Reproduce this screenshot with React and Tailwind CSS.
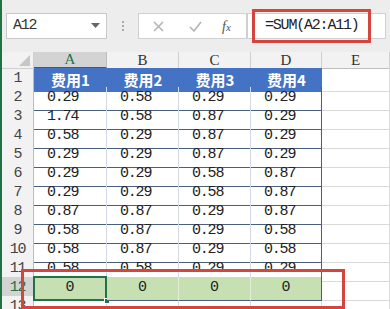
import React from "react";

const COLS = "grid grid-cols-[32px_73px_72px_72px_71px_1fr]";
const mono = { fontFamily: '"Liberation Mono", "DejaVu Sans Mono", monospace' };
const cjk = { fontFamily: '"Noto Sans CJK SC", "Noto Sans", sans-serif' };
const serif = { fontFamily: '"Liberation Serif", "DejaVu Serif", serif' };

const data = [
  ["0.29", "0.58", "0.29", "0.29"],
  ["1.74", "0.58", "0.87", "0.29"],
  ["0.58", "0.29", "0.87", "0.29"],
  ["0.29", "0.29", "0.87", "0.29"],
  ["0.29", "0.29", "0.58", "0.87"],
  ["0.29", "0.29", "0.58", "0.87"],
  ["0.87", "0.87", "0.29", "0.87"],
  ["0.58", "0.87", "0.29", "0.58"],
  ["0.58", "0.87", "0.29", "0.58"],
  ["0.58", "0.58", "0.29", "0.29"],
];

function RowHead({ n, active }) {
  return (
    <div
      className={
        "flex items-center justify-center border-b border-r text-[15px] tracking-[-1.2px] " +
        (active
          ? "bg-[#d3d3d3] text-[#217346] border-b-[#bdbdbd] border-r-[#217346]"
          : "bg-[#f2f2f2] text-[#444] border-b-[#d6d6d6] border-r-[#bdbdbd]")
      }
      style={mono}
    >
      {n}
    </div>
  );
}

export default function App() {
  return (
    <div className="relative w-[390px] h-[309px] overflow-hidden bg-white border-l-2 border-[#217346]">
      {/* toolbar */}
      <div className="h-[52px] bg-[#ededed] flex items-start pt-[13px] pl-[4px]">
        <div className="w-[101px] h-[26px] bg-white border border-[#c8c8c8] flex items-center pl-[6px] pr-[6px] justify-between">
          <span className="text-[15px] text-[#333] tracking-[-1.2px]" style={mono}>A12</span>
          <svg width="9" height="6" viewBox="0 0 9 6"><polygon points="0,0 9,0 4.5,5" fill="#666" /></svg>
        </div>
        <div className="w-[31px] h-[26px] flex flex-col items-center justify-center gap-[2px]">
          <div className="w-[2px] h-[2px] bg-[#aaa]" />
          <div className="w-[2px] h-[2px] bg-[#aaa]" />
          <div className="w-[2px] h-[2px] bg-[#aaa]" />
        </div>
        <div className="w-[109px] h-[26px] bg-white border border-[#d0d0d0] flex items-center">
          <svg className="ml-[14px]" width="11" height="11" viewBox="0 0 11 11">
            <path d="M1 1 L10 10 M10 1 L1 10" stroke="#b4b4b4" strokeWidth="1.6" />
          </svg>
          <svg className="ml-[25px]" width="13" height="11" viewBox="0 0 13 11">
            <path d="M1 6 L5 10 L12 1" stroke="#b4b4b4" strokeWidth="1.6" fill="none" />
          </svg>
          <span className="ml-[20px] italic text-[14px] text-[#555]" style={serif}>
            f<span className="text-[11px]">x</span>
          </span>
        </div>
        <div className="w-[139px] h-[26px] bg-white border border-[#d0d0d0] flex items-center pl-[17px]">
          <span className="text-[15px] text-[#222] tracking-[-1.2px]" style={mono}>=SUM(A2:A11)</span>
        </div>
      </div>

      {/* column headers */}
      <div className={COLS + " h-[16px] bg-[#f2f2f2]"}>
        <div className="relative border-r border-b border-[#d0d0d0]">
          <svg className="absolute right-[3px] bottom-[2px]" width="11" height="11" viewBox="0 0 11 11">
            <polygon points="11,0 11,11 0,11" fill="#c6c6c6" />
          </svg>
        </div>
        <div className="bg-[#d3d3d3] border-b-2 border-[#217346] border-r border-r-[#bdbdbd] flex items-center justify-center text-[15px] leading-none text-[#217346]" style={serif}>A</div>
        {["B", "C", "D", "E"].map((c) => (
          <div key={c} className="border-r border-b border-[#d0d0d0] border-b-[#bdbdbd] flex items-center justify-center text-[15px] leading-none text-[#333]" style={serif}>{c}</div>
        ))}
      </div>

      {/* row 1 */}
      <div className={COLS + " h-[19px]"}>
        <RowHead n="1" />
        {["费用1", "费用2", "费用3", "费用4"].map((h) => (
          <div key={h} className="bg-[#4472c4] flex items-center justify-center text-white font-bold text-[15px] leading-none" style={cjk}>{h}</div>
        ))}
        <div className="border-b border-r border-[#dadada]" />
      </div>

      {/* data rows */}
      {data.map((r, i) => (
        <div key={i} className={COLS + " h-[19px]"}>
          <RowHead n={String(i + 2)} />
          {r.map((v, j) => (
            <div
              key={j}
              className={
                "border-b border-b-[#4a5f80] border-r flex items-center pl-[13px] text-[15px] tracking-[-1.2px] text-[#222] " +
                (j === 3 ? "border-r-[#4a5f80]" : "border-r-[#d5dbe6]")
              }
              style={mono}
            >
              {v}
            </div>
          ))}
          <div className="border-b border-r border-[#dadada]" />
        </div>
      ))}

      {/* row 12 */}
      <div className={COLS + " h-[19px]"}>
        <RowHead n="12" active />
        {[0, 1, 2, 3].map((j) => (
          <div
            key={j}
            className={
              "relative bg-[#c6e0b4] border-b border-b-[#4a5f80] border-r flex items-center justify-center text-[15px] text-[#222] " +
              (j === 3 ? "border-r-[#4a5f80]" : "border-r-[#e3efda]")
            }
            style={mono}
          >
            0
            {j === 0 && (
              <>
                <div className="absolute left-[-1px] top-[-1px] right-[-1px] bottom-[-1px] border-2 border-[#217346]" />
                <div className="absolute right-[-4px] bottom-[-4px] w-[6px] h-[6px] bg-[#217346] border border-white" />
              </>
            )}
          </div>
        ))}
        <div className="border-b border-r border-[#dadada]" />
      </div>

      {/* row 13 */}
      <div className={COLS + " h-[19px]"}>
        <RowHead n="13" />
        {[0, 1, 2, 3, 4].map((j) => (
          <div key={j} className="border-b border-r border-[#dadada]" />
        ))}
      </div>

      {/* red annotation boxes */}
      <div className="absolute left-[250px] top-[9px] w-[119px] h-[34px] border-[3px] border-[#d6453d]" />
      <div className="absolute left-[19px] top-[269px] w-[324px] h-[40px] border-[3px] border-[#d6453d]" />
    </div>
  );
}
